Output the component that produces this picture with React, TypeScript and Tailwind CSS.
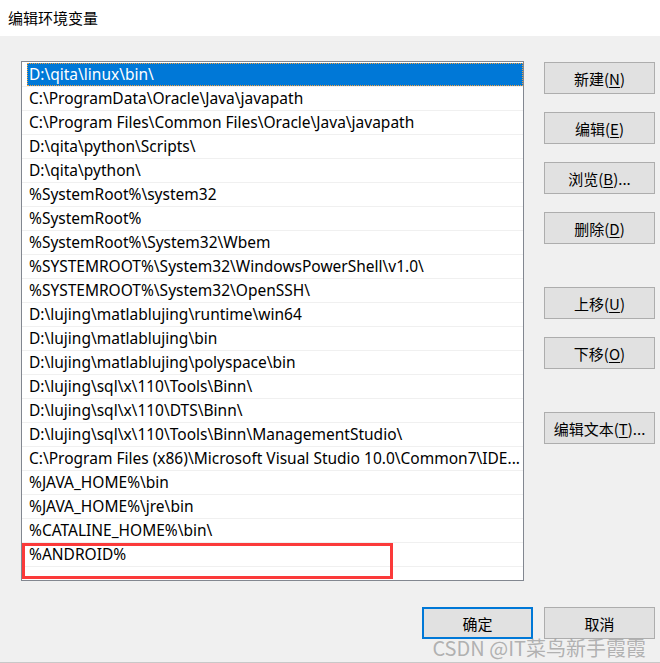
import React from "react";

const items = [
  "D:\\qita\\linux\\bin\\",
  "C:\\ProgramData\\Oracle\\Java\\javapath",
  "C:\\Program Files\\Common Files\\Oracle\\Java\\javapath",
  "D:\\qita\\python\\Scripts\\",
  "D:\\qita\\python\\",
  "%SystemRoot%\\system32",
  "%SystemRoot%",
  "%SystemRoot%\\System32\\Wbem",
  "%SYSTEMROOT%\\System32\\WindowsPowerShell\\v1.0\\",
  "%SYSTEMROOT%\\System32\\OpenSSH\\",
  "D:\\lujing\\matlablujing\\runtime\\win64",
  "D:\\lujing\\matlablujing\\bin",
  "D:\\lujing\\matlablujing\\polyspace\\bin",
  "D:\\lujing\\sql\\x\\110\\Tools\\Binn\\",
  "D:\\lujing\\sql\\x\\110\\DTS\\Binn\\",
  "D:\\lujing\\sql\\x\\110\\Tools\\Binn\\ManagementStudio\\",
  "C:\\Program Files (x86)\\Microsoft Visual Studio 10.0\\Common7\\IDE...",
  "%JAVA_HOME%\\bin",
  "%JAVA_HOME%\\jre\\bin",
  "%CATALINE_HOME%\\bin\\",
  "%ANDROID%",
  "",
];

const cjk = "font-['Noto_Sans_CJK_SC','Noto_Sans',sans-serif]";

function Btn({
  label,
  mn,
  suffix = "",
  className = "",
  primary = false,
}: {
  label: string;
  mn: string;
  suffix?: string;
  className?: string;
  primary?: boolean;
}) {
  return (
    <div
      className={`w-[111px] h-[32px] flex items-center justify-center bg-[#e1e1e1] text-[15px] text-black leading-none ${
        primary ? "border-2 border-[#0078d7]" : "border border-[#adadad]"
      } ${className}`}
    >
      <span>
        {label}
        {mn ? (
          <>
            (<span className="underline underline-offset-2">{mn}</span>)
          </>
        ) : null}
        {suffix}
      </span>
    </div>
  );
}

export default function App() {
  return (
    <div className={`relative w-[660px] h-[663px] bg-[#f0f0f0] overflow-hidden ${cjk}`}>
      <div className="h-[36px] bg-white flex items-center pl-[8px] text-[15px] text-black">
        编辑环境变量
      </div>
      <div className="flex">
        <div className="relative ml-[21px] mt-[25px] w-[503px] h-[520px] border border-[#828790] bg-white overflow-hidden pt-[1px]">
          {items.map((t, i) => (
            <div key={i} className="h-[24px] border-b border-[#f0f0f0] flex">
              <div
                className={`flex-1 flex items-center ml-[5px] pl-[2px] pt-[1px] text-[15.5px] whitespace-nowrap font-['Noto_Sans',sans-serif] ${
                  i === 0
                    ? "bg-[#0078d7] text-white outline-1 outline-dotted outline-[#f0a040] -outline-offset-1"
                    : "text-black"
                }`}
              >
                {t}
              </div>
            </div>
          ))}
          <div className="absolute left-0 top-[481px] w-[371px] h-[36px] border-[3px] border-[#fb3a3a]" />
        </div>
        <div className="ml-[20px] mt-[26px] flex flex-col">
          <Btn label="新建" mn="N" />
          <Btn label="编辑" mn="E" className="mt-[18px]" />
          <Btn label="浏览" mn="B" suffix="..." className="mt-[18px]" />
          <Btn label="删除" mn="D" className="mt-[18px]" />
          <Btn label="上移" mn="U" className="mt-[43px]" />
          <Btn label="下移" mn="O" className="mt-[18px]" />
          <Btn label="编辑文本" mn="T" suffix="..." className="mt-[43px]" />
        </div>
      </div>
      <div className="flex justify-end pr-[5px] mt-[26px] gap-[11px]">
        <Btn label="确定" mn="" primary />
        <Btn label="取消" mn="" />
      </div>
      <div className="absolute left-0 right-0 bottom-0 h-px bg-[#c8c8c8]" />
      <div className="absolute right-[14px] bottom-[5px] text-[20px] leading-none text-[#a0a0a0]/80 font-['Noto_Sans_CJK_SC',sans-serif] pointer-events-none">
        CSDN @IT菜鸟新手霞霞
      </div>
    </div>
  );
}
